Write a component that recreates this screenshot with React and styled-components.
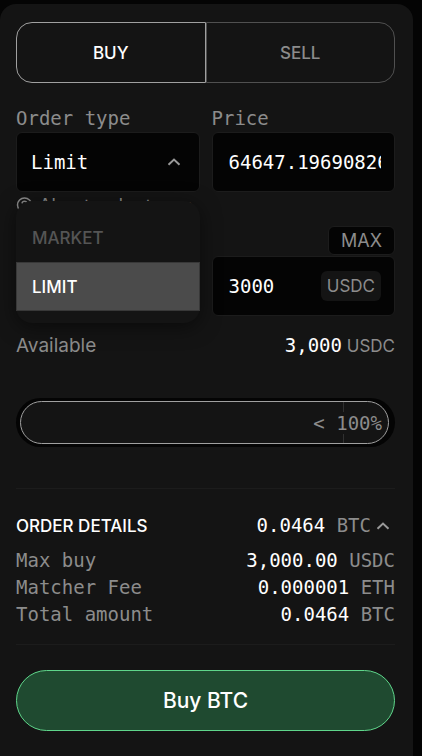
import { useState } from 'react';
import styled, { createGlobalStyle, css } from 'styled-components';

const mono = css`
  font-family: 'DejaVu Sans Mono', 'Liberation Mono', monospace;
  font-size: 19px;
`
const sans = css`
  font-family: Inter, 'Liberation Sans', sans-serif;
  font-size: 17px;
`

const GlobalStyle = createGlobalStyle`
  * {
    box-sizing: border-box;
  }
  body {
    margin: 0;
    background: #040404;
    color: #fff;
  }
  button, input, select {
    margin: 0;
    color: inherit;
    outline: none;
  }
`

function Chevron() {
  return (
    <StyledChevron viewBox="0 0 14 8" aria-hidden="true">
      <path d="M1.5 6.8 L7 1.6 L12.5 6.8" />
    </StyledChevron>
  )
}

function Info() {
  return (
    <StyledInfo viewBox="0 0 16 16" aria-hidden="true">
      <circle cx="8.5" cy="8" r="7" />
      <path d="M6 6.4 C6.4 3.6 10.6 3.6 10.8 6.4 C10.8 8 8.5 8 8.5 9.8 M8.5 11.2v1.4" />
    </StyledInfo>
  )
}

const orderTypes = ['Market', 'Limit']

const details = [
  { name: 'Max buy', value: '3,000.00', unit: 'USDC' },
  { name: 'Matcher Fee', value: '0.000001', unit: 'ETH' },
  { name: 'Total amount', value: '0.0464', unit: 'BTC' },
]

function App() {
  const [side, setSide] = useState('buy')
  const [type, setType] = useState('Limit')
  const [menu, setMenu] = useState(true)
  const [price, setPrice] = useState('64647.19690826')
  const [amount, setAmount] = useState('3000')
  const [percent, setPercent] = useState(100)
  const [showDetails, setShowDetails] = useState(true)

  const openMenu = (event) => {
    event.preventDefault()
    setMenu((prev) => !prev)
  }
  const choose = (value) => {
    setType(value)
    setMenu(false)
  }
  const percentHandler = (event) => {
    setPercent(Number(event.target.value))
  }

  return (
    <>
      <GlobalStyle />
      <Panel>
        <Tabs>
          <Tab type="button" $active={side === 'buy'} onClick={() => setSide('buy')}>BUY</Tab>
          <Tab type="button" $active={side === 'sell'} onClick={() => setSide('sell')}>SELL</Tab>
        </Tabs>

        <Fields>
          <Field>
            <Label htmlFor="type">Order type</Label>
            <Box>
              <Select id="type" value={type} onMouseDown={openMenu} onChange={(e) => choose(e.target.value)}>
                {orderTypes.map((el) => (
                  <option key={el} value={el}>{el}</option>
                ))}
              </Select>
              <Chevron />
            </Box>
            <Hint href="#types">
              <Info />
              About order types
            </Hint>
            {menu && (
              <Menu>
                {orderTypes.map((el) => (
                  <Option key={el} type="button" $active={el === type} onClick={() => choose(el)}>
                    {el.toUpperCase()}
                  </Option>
                ))}
              </Menu>
            )}
          </Field>
          <Field>
            <Label htmlFor="price">Price</Label>
            <Box>
              <Input id="price" value={price} onChange={(e) => setPrice(e.target.value)} />
            </Box>
          </Field>
        </Fields>

        <Amount>
          <Max type="button" onClick={() => setAmount('3000')}>MAX</Max>
          <Box>
            <Input aria-label="Amount" value={amount} onChange={(e) => setAmount(e.target.value)} />
            <Currency>USDC</Currency>
          </Box>
        </Amount>

        <Available>
          <AvailableLabel>Available</AvailableLabel>
          <span>
            <Balance>3,000</Balance>
            {' '}
            USDC
          </span>
        </Available>

        <Slider>
          <Fill style={{ width: `${percent}%` }}>
            <Percent>{`< ${percent}%`}</Percent>
          </Fill>
          <Range type="range" aria-label="Percent of balance" value={percent} onChange={percentHandler} />
        </Slider>

        <Details>
          <DetailsHeader type="button" onClick={() => setShowDetails((prev) => !prev)}>
            <Title>ORDER DETAILS</Title>
            <Value>
              0.0464
              {' '}
              <Unit>BTC</Unit>
            </Value>
            <Chevron />
          </DetailsHeader>
          {showDetails && details.map((el) => (
            <Row key={el.name}>
              <Unit>{el.name}</Unit>
              <Value>
                {el.value}
                {' '}
                <Unit>{el.unit}</Unit>
              </Value>
            </Row>
          ))}
        </Details>

        <Submit type="button">Buy BTC</Submit>
      </Panel>
    </>
  )
}

export default App;

const Panel = styled.main`
  margin: 4px 9px 0 0;
  padding: 18px 18px 26px 16px;
  min-height: calc(100vh - 4px);
  border-radius: 16px 16px 0 0;
  background: #141414;
`
const Tabs = styled.div`
  display: grid;
  grid-template-columns: 1fr 1fr;
  height: 61px;
`
const Tab = styled.button`
  ${sans}
  font-weight: 500;
  color: ${(props) => (props.$active ? '#fff' : '#8c8c8c')};
  background: none;
  border: 1px solid ${(props) => (props.$active ? '#a0a0a0' : '#505050')};
  cursor: pointer;
  &:first-child {
    border-radius: 16px 0 0 16px;
  }
  &:last-child {
    border-radius: 0 16px 16px 0;
  }
`
const Fields = styled.div`
  display: grid;
  grid-template-columns: 1fr 1fr;
  gap: 12px;
  margin-top: 21px;
`
const Field = styled.div`
  position: relative;
  min-width: 0;
`
const Label = styled.label`
  ${mono}
  display: block;
  line-height: 28px;
  color: #8c8c8c;
`
const control = css`
  ${mono}
  flex: 1;
  min-width: 0;
  padding: 0;
  border: none;
  background: none;
`
const Select = styled.select`
  ${control}
  appearance: none;
  cursor: pointer;
`
const Input = styled.input`
  ${control}
`
const Box = styled.div`
  display: flex;
  align-items: center;
  height: 60px;
  padding: 0 13px 0 14px;
  border: 1px solid #1c1c1c;
  border-radius: 6px;
  background: #040404;
  &:has(input) {
    padding-left: 16px;
  }
`
const StyledChevron = styled.svg`
  flex: none;
  width: 14px;
  height: 8px;
  margin: 0 5px;
  fill: none;
  stroke: #999;
  stroke-width: 2;
`
const Hint = styled.a`
  ${sans}
  display: flex;
  align-items: center;
  gap: 7px;
  height: 26px;
  font-size: 18px;
  color: #8c8c8c;
  text-decoration: none;
  white-space: nowrap;
`
const StyledInfo = styled.svg`
  flex: none;
  width: 16px;
  height: 16px;
  fill: none;
  stroke: #8c8c8c;
  stroke-width: 1.5;
`
const Menu = styled.div`
  position: absolute;
  top: 97px;
  left: 0;
  right: 0;
  z-index: 1;
  padding: 12px 0;
  border-radius: 16px;
  background: #141414;
  box-shadow: 0 4px 20px rgba(0, 0, 0, 0.5);
`
const Option = styled.button`
  ${sans}
  display: block;
  width: 100%;
  height: 49px;
  padding: 0 15px;
  border: 1px solid ${(props) => (props.$active ? '#383838' : 'transparent')};
  background: ${(props) => (props.$active ? '#4b4b4b' : 'none')};
  color: ${(props) => (props.$active ? '#fff' : '#555')};
  font-weight: 500;
  text-align: left;
  cursor: pointer;
`
const Amount = styled.div`
  display: flex;
  flex-direction: column;
  align-items: flex-end;
  gap: 1px;
  margin-top: 8px;
  ${Box} {
    width: calc(50% - 6px);
  }
`
const Max = styled.button`
  ${sans}
  height: 29px;
  padding: 0 12px;
  border: 1px solid #1c1c1c;
  border-radius: 6px;
  background: #040404;
  color: #8c8c8c;
  font-size: 18px;
  cursor: pointer;
`
const Currency = styled.span`
  ${sans}
  padding: 0 6px;
  border-radius: 6px;
  background: #141414;
  color: #8c8c8c;
  line-height: 30px;
`
const Available = styled.div`
  ${sans}
  display: flex;
  justify-content: space-between;
  margin-top: 16px;
  line-height: 27px;
  color: #8c8c8c;
`
const AvailableLabel = styled.span`
  font-size: 19px;
`
const Balance = styled.span`
  ${mono}
  color: #fff;
`
const Slider = styled.div`
  position: relative;
  height: 49px;
  margin-top: 38px;
  padding: 3px 6px 3px 4px;
  border-radius: 25px;
  background: #040404;
`
const Fill = styled.div`
  position: relative;
  display: flex;
  align-items: center;
  justify-content: flex-end;
  height: 43px;
  padding-right: 6px;
  border: 1px solid #a0a0a0;
  border-radius: 22px;
  background: #141414;
  &::before {
    content: '';
    position: absolute;
    top: 0;
    bottom: 0;
    right: 44px;
    width: 1px;
    background: #303030;
  }
`
const Percent = styled.span`
  ${mono}
  position: relative;
  background: #141414;
  color: #8c8c8c;
`
const Range = styled.input`
  position: absolute;
  inset: 0;
  width: 100%;
  opacity: 0;
  cursor: pointer;
`
const Details = styled.section`
  margin-top: 41px;
  padding: 23px 0 16px;
  border-top: 1px solid #1c1c1c;
  border-bottom: 1px solid #1c1c1c;
`
const DetailsHeader = styled.button`
  display: flex;
  align-items: center;
  width: 100%;
  margin-bottom: 8px;
  padding: 0;
  border: none;
  background: none;
  cursor: pointer;
`
const Title = styled.span`
  ${sans}
  flex: 1;
  font-weight: 500;
  text-align: left;
`
const Value = styled.span`
  ${mono}
  line-height: 27px;
`
const Unit = styled.span`
  ${mono}
  color: #8c8c8c;
`
const Row = styled.div`
  display: flex;
  justify-content: space-between;
  line-height: 27px;
`
const Submit = styled.button`
  ${sans}
  width: 100%;
  height: 61px;
  margin-top: 25px;
  border: 1px solid #5fd68b;
  border-radius: 31px;
  background: #1f4a30;
  color: #fff;
  font-size: 21px;
  font-weight: 500;
  cursor: pointer;
`
